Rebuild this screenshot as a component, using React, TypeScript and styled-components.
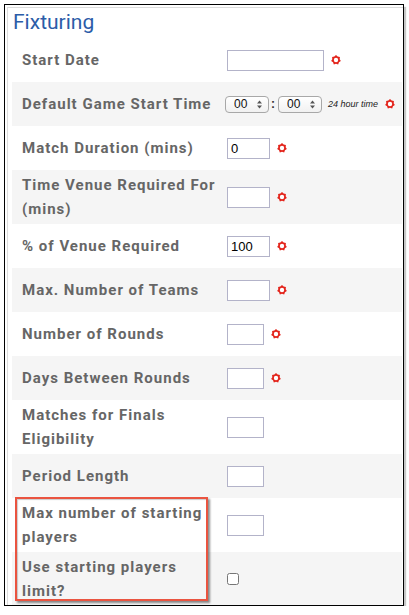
import React from "react";
import styled, { createGlobalStyle } from "styled-components";

const GlobalStyle = createGlobalStyle`
  html, body { margin: 0; padding: 0; background: #ffffff; }
  body { font-family: "Roboto", "Liberation Sans", sans-serif; }
`;

const Frame = styled.div`
  margin: 4px 0 0 4px;
  width: 400px;
  height: 602px;
  box-sizing: border-box;
  border: 1px solid #000;
  box-shadow: 2px 3px 1px rgba(0, 0, 0, 0.22);
  overflow: hidden;
  background: #fff;
`;

const Panel = styled.div`
  padding: 0 1px 0 7px;
  box-shadow: inset 2px 2px 0 #fff, inset 3px 3px 0 #dcdcdc;
  height: 100%;
  box-sizing: border-box;
`;

const Title = styled.h2`
  margin: 0;
  padding: 5px 0 3px 1px;
  font-family: "Roboto", "Liberation Sans", sans-serif;
  font-weight: 400;
  font-size: 21px;
  line-height: 25px;
  color: #2b5ca8;
`;

const Row = styled.div<{ $shade?: boolean }>`
  display: grid;
  grid-template-columns: 215px 1fr;
  align-items: center;
  min-height: 44px;
  padding: 3px 0;
  box-sizing: border-box;
  background: ${(p) => (p.$shade ? "#f5f5f5" : "#ffffff")};
`;

const Label = styled.div`
  padding: 0 4px 0 10px;
  font-family: "Roboto", "Liberation Sans", sans-serif;
  font-weight: 700;
  font-size: 15px;
  line-height: 24px;
  letter-spacing: 1px;
  color: #666666;
`;

const Field = styled.div`
  display: flex;
  align-items: center;
`;

const TextBox = styled.input<{ $w: number }>`
  width: ${(p) => p.$w}px;
  height: 21px;
  box-sizing: border-box;
  margin: 0;
  border: 1px solid #b3b3c9;
  border-radius: 0;
  padding: 0 3px;
  background: #fff;
  font-family: "Liberation Sans", Arial, sans-serif;
  font-size: 13px;
  color: #000;
  outline: none;
`;

const StarWrap = styled.span`
  display: inline-flex;
  margin-left: 7px;
`;

const SelectWrap = styled.span`
  position: relative;
  display: inline-flex;
`;

const TimeSelect = styled.select`
  appearance: none;
  -webkit-appearance: none;
  width: 44px;
  height: 17px;
  box-sizing: border-box;
  margin: 0;
  padding: 0 0 0 8px;
  border: 1px solid #a8a8a8;
  border-radius: 4px;
  background: linear-gradient(#ffffff, #f1f1f1);
  font-family: "Liberation Sans", Arial, sans-serif;
  font-size: 12px;
  line-height: 15px;
  color: #111;
  outline: none;
`;

const Arrows = styled.svg`
  position: absolute;
  right: 7px;
  top: 4px;
  pointer-events: none;
`;

const TimeGroup = styled.div`
  display: flex;
  align-items: center;
  margin-left: -2px;
`;

const Colon = styled.span`
  font-family: "Liberation Sans", Arial, sans-serif;
  font-weight: 700;
  font-size: 12px;
  color: #333;
  margin: 0 3px 0 2px;
`;

const Hint = styled.span`
  font-family: "Liberation Sans", Arial, sans-serif;
  font-style: italic;
  font-size: 9px;
  color: #222;
  margin-left: 6px;
`;

const Check = styled.input`
  width: 12px;
  height: 12px;
  margin: 0;
  accent-color: #777;
`;

const Highlighted = styled.div`
  position: relative;
`;

const Callout = styled.div`
  position: absolute;
  top: -1px;
  left: 3px;
  width: 193px;
  height: 104px;
  box-sizing: border-box;
  border: 2px solid #ea5440;
  box-shadow: 2px 2px 2px rgba(0, 0, 0, 0.45), inset 1px 1px 1px rgba(0, 0, 0, 0.2);
  pointer-events: none;
`;

const Star = () => {
  const pts: string[] = [];
  for (let i = 0; i < 14; i++) {
    const r = i % 2 === 0 ? 5 : 3.8;
    const a = (Math.PI * 2 * i) / 14 - Math.PI / 2;
    pts.push(`${(5 + r * Math.cos(a)).toFixed(2)},${(5 + r * Math.sin(a)).toFixed(2)}`);
  }
  return (
    <StarWrap>
      <svg width="10" height="10" viewBox="0 0 10 10">
        <polygon points={pts.join(" ")} fill="#e3241b" />
        <circle cx="5" cy="5" r="2.2" fill="#fff" />
      </svg>
    </StarWrap>
  );
};

const Time = () => (
  <SelectWrap>
    <TimeSelect defaultValue="00">
      <option value="00">00</option>
    </TimeSelect>
    <Arrows width="5" height="9" viewBox="0 0 5 9">
      <polygon points="0,3.5 2.5,0.5 5,3.5" fill="#555" />
      <polygon points="0,5.5 2.5,8.5 5,5.5" fill="#555" />
    </Arrows>
  </SelectWrap>
);

export default function App() {
  return (
    <>
      <GlobalStyle />
      <Frame>
        <Panel>
          <Title>Fixturing</Title>
          <Row>
            <Label>Start Date</Label>
            <Field>
              <TextBox $w={97} />
              <Star />
            </Field>
          </Row>
          <Row $shade>
            <Label>Default Game Start Time</Label>
            <Field>
              <TimeGroup>
                <Time />
                <Colon>:</Colon>
                <Time />
              </TimeGroup>
              <Hint>24 hour time</Hint>
              <Star />
            </Field>
          </Row>
          <Row>
            <Label>Match Duration (mins)</Label>
            <Field>
              <TextBox $w={43} defaultValue="0" />
              <Star />
            </Field>
          </Row>
          <Row $shade>
            <Label>Time Venue Required For (mins)</Label>
            <Field>
              <TextBox $w={43} />
              <Star />
            </Field>
          </Row>
          <Row>
            <Label>% of Venue Required</Label>
            <Field>
              <TextBox $w={43} defaultValue="100" />
              <Star />
            </Field>
          </Row>
          <Row $shade>
            <Label>Max. Number of Teams</Label>
            <Field>
              <TextBox $w={43} />
              <Star />
            </Field>
          </Row>
          <Row>
            <Label>Number of Rounds</Label>
            <Field>
              <TextBox $w={37} />
              <Star />
            </Field>
          </Row>
          <Row $shade>
            <Label>Days Between Rounds</Label>
            <Field>
              <TextBox $w={37} />
              <Star />
            </Field>
          </Row>
          <Row>
            <Label>Matches for Finals Eligibility</Label>
            <Field>
              <TextBox $w={37} />
            </Field>
          </Row>
          <Row $shade>
            <Label>Period Length</Label>
            <Field>
              <TextBox $w={37} />
            </Field>
          </Row>
          <Highlighted>
            <Row>
              <Label>Max number of starting players</Label>
              <Field>
                <TextBox $w={37} />
              </Field>
            </Row>
            <Row $shade>
              <Label>Use starting players limit?</Label>
              <Field>
                <Check type="checkbox" />
              </Field>
            </Row>
            <Callout />
          </Highlighted>
        </Panel>
      </Frame>
    </>
  );
}
